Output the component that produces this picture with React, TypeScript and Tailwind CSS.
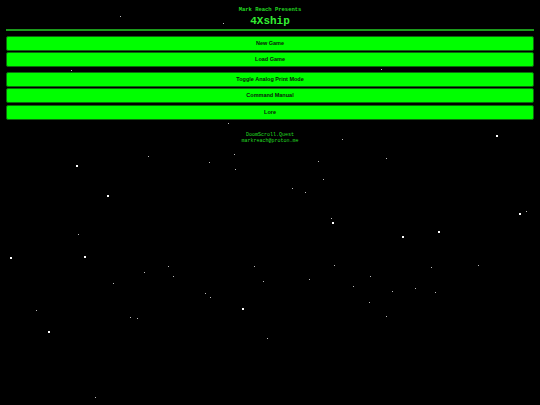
import React from 'react';

// star field: [x, y, size]
const STARS: [number, number, number][] = [
  [120, 16, 1], [223, 23, 1], [71, 70, 1], [381, 69, 1], [228, 123, 1],
  [76, 165, 2], [342, 139, 1], [496, 135, 2], [148, 156, 1], [234, 154, 1],
  [209, 162, 1], [318, 161, 1], [386, 158, 1], [235, 169, 1], [323, 179, 1],
  [292, 188, 1], [305, 192, 1], [107, 195, 2], [519, 213, 2], [526, 211, 1],
  [331, 218, 1], [332, 222, 2], [402, 236, 2], [438, 231, 2], [78, 234, 1],
  [10, 257, 2], [84, 256, 2], [168, 266, 1], [144, 272, 1], [173, 276, 1],
  [254, 266, 1], [334, 265, 1], [431, 267, 1], [478, 265, 1], [370, 276, 1],
  [309, 279, 1], [263, 281, 1], [113, 283, 1], [205, 293, 1], [210, 297, 1],
  [353, 286, 1], [415, 288, 1], [392, 291, 1], [435, 292, 1], [369, 302, 1],
  [242, 308, 2], [36, 310, 1], [130, 317, 1], [137, 318, 1], [386, 316, 1],
  [48, 331, 2], [267, 338, 1], [95, 397, 1], [425, 88, 1],
];

const MENU_TOP = ['New Game', 'Load Game'];
const MENU_BOTTOM = ['Toggle Analog Print Mode', 'Command Manual', 'Lore'];

function MenuButton({ label }: { label: string }) {
  return (
    <button className="flex h-[15px] w-full items-center justify-center rounded-[2px] border border-[#0b6b0b] bg-[#00ff00] pt-[1px] text-[5.5px] font-bold leading-none text-[#0a200a] [font-family:'Liberation_Sans',Arial,sans-serif]">
      {label}
    </button>
  );
}

export default function App() {
  return (
    <div className="relative h-[405px] w-full overflow-hidden bg-black">
      {STARS.map(([x, y, s], i) => (
        <span
          key={i}
          className={s === 2 ? 'absolute bg-white' : 'absolute bg-[#bbbbbb]'}
          style={{ left: x, top: y, width: s, height: s }}
        />
      ))}

      <div className="relative px-[6px] pt-[7px] [font-family:'Liberation_Mono','DejaVu_Sans_Mono',monospace]">
        <div className="text-center text-[5.5px] font-bold leading-[6px] text-[#22dd22]">Mark Reach Presents</div>
        <div className="mt-[2px] text-center text-[11px] font-bold leading-[12px] text-[#33ee33]">4Xship</div>
        <div className="mt-[2px] h-[1.5px] bg-[#1a9a1a]" />

        <div className="mt-[5px] flex flex-col gap-[1.5px]">
          {MENU_TOP.map((m) => (
            <MenuButton key={m} label={m} />
          ))}
        </div>
        <div className="mt-[4.5px] flex flex-col gap-[1.5px]">
          {MENU_BOTTOM.map((m) => (
            <MenuButton key={m} label={m} />
          ))}
        </div>

        <div className="mt-[12px] text-center text-[5px] leading-[6px] text-[#22dd22]">
          <div>DoomScroll.Quest</div>
          <div>markreach@proton.me</div>
        </div>
      </div>
    </div>
  );
}
